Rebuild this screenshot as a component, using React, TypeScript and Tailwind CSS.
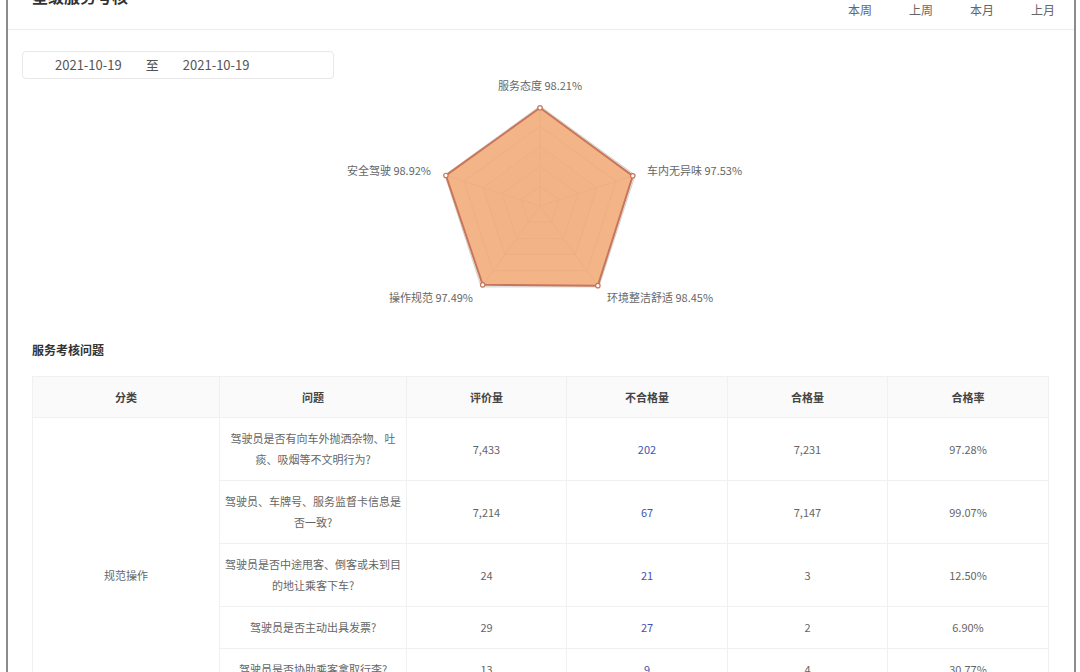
const axes = [
  { name: '服务态度', value: 98.21, angle: -90 },
  { name: '车内无异味', value: 97.53, angle: -18 },
  { name: '环境整洁舒适', value: 98.45, angle: 54 },
  { name: '操作规范', value: 97.49, angle: 126 },
  { name: '安全驾驶', value: 98.92, angle: 198 },
];

const CX = 219;
const CY = 129;
const R = 100;

const pt = (angle: number, r: number) => {
  const a = (angle * Math.PI) / 180;
  return [CX + r * Math.cos(a), CY + r * Math.sin(a)];
};

const ring = (r: number) => axes.map((a) => pt(a.angle, r).join(',')).join(' ');

const rows = [
  { q: '驾驶员是否有向车外抛洒杂物、吐痰、吸烟等不文明行为?', total: '7,433', bad: '202', good: '7,231', rate: '97.28%' },
  { q: '驾驶员、车牌号、服务监督卡信息是否一致?', total: '7,214', bad: '67', good: '7,147', rate: '99.07%' },
  { q: '驾驶员是否中途甩客、倒客或未到目的地让乘客下车?', total: '24', bad: '21', good: '3', rate: '12.50%' },
  { q: '驾驶员是否主动出具发票?', total: '29', bad: '27', good: '2', rate: '6.90%' },
  { q: '驾驶员是否协助乘客拿取行李?', total: '13', bad: '9', good: '4', rate: '30.77%' },
  { q: '驾驶员是否按规定使用计价器?', total: '18', bad: '5', good: '13', rate: '72.22%' },
];

const RadarChart = () => {
  const levels = [100, 80, 60, 40, 20];
  const data = axes.map((a) => pt(a.angle, a.value));
  return (
    <svg width="440" height="240" viewBox="0 0 440 240" className="mx-auto -mt-[2px] block">
      {/* split areas */}
      {levels.map((l, i) => (
        <polygon key={l} points={ring(l)} fill={i % 2 === 0 ? '#e2e2e2' : '#fafafa'} fillOpacity={0.3} stroke="#d0d0d0" strokeWidth={1} />
      ))}
      {axes.map((a) => {
        const [x, y] = pt(a.angle, R);
        return <line key={a.name} x1={CX} y1={CY} x2={x} y2={y} stroke="#d0d0d0" strokeWidth={1} />;
      })}
      <polygon
        points={data.map((p) => p.join(',')).join(' ')}
        fill="#f2a873"
        fillOpacity={0.85}
        stroke="#c8765a"
        strokeWidth={2}
        strokeLinejoin="round"
      />
      {data.map(([x, y], i) => (
        <circle key={i} cx={x} cy={y} r={2.2} fill="#fff" stroke="#c8765a" strokeWidth={1.2} />
      ))}
      <g fontSize="11" fill="#666" dominantBaseline="middle">
        <text x={219} y={10} textAnchor="middle">服务态度 98.21%</text>
        <text x={326} y={95} textAnchor="start">车内无异味 97.53%</text>
        <text x={286} y={222} textAnchor="start">环境整洁舒适 98.45%</text>
        <text x={152} y={222} textAnchor="end">操作规范 97.49%</text>
        <text x={110} y={95} textAnchor="end">安全驾驶 98.92%</text>
      </g>
    </svg>
  );
};

const App = () => {
  return (
    <div className="bg-white min-h-screen pl-[6px] pr-[4px] font-['Noto_Sans_CJK_SC','Liberation_Sans',sans-serif]">
      <div className="border-x-2 border-[#8c8c8c] min-h-screen pb-10">
        {/* Header */}
        <div className="-mt-5 h-[50px] border-b border-[#ececec] flex items-start justify-between pl-6 pr-[19px]">
          <h1 className="pt-1 text-[16px] leading-[24px] font-bold text-[#333]">星级服务考核</h1>
          <div className="pt-[21px] flex gap-[37px] text-[12px] leading-[18px] text-[#666]">
            <span>本周</span>
            <span>上周</span>
            <span>本月</span>
            <span>上月</span>
          </div>
        </div>

        {/* Date range */}
        <div className="mt-[21px] ml-[14px] w-[312px] h-[28px] border border-[#e8e8e8] rounded flex items-center gap-6 pl-[32px] text-[13px] text-[#555]">
          <span>2021-10-19</span>
          <span>至</span>
          <span>2021-10-19</span>
        </div>

        <RadarChart />

        <h2 className="mt-[25px] ml-6 text-[12px] leading-[16px] font-bold text-[#333]">服务考核问题</h2>

        <table className="mt-[18px] ml-6 w-[1016px] table-fixed border-collapse text-[11px] text-center">
          <colgroup>
            <col className="w-[187px]" />
            <col className="w-[187px]" />
            <col className="w-[160px]" />
            <col className="w-[161px]" />
            <col className="w-[160px]" />
            <col className="w-[161px]" />
          </colgroup>
          <thead>
            <tr className="bg-[#fafafa] text-[#444] font-bold">
              <th className="border border-[#f0f0f0] py-[10px] leading-[20px]">分类</th>
              <th className="border border-[#f0f0f0] py-[10px] leading-[20px]">问题</th>
              <th className="border border-[#f0f0f0] py-[10px] leading-[20px]">评价量</th>
              <th className="border border-[#f0f0f0] py-[10px] leading-[20px]">不合格量</th>
              <th className="border border-[#f0f0f0] py-[10px] leading-[20px]">合格量</th>
              <th className="border border-[#f0f0f0] py-[10px] leading-[20px]">合格率</th>
            </tr>
          </thead>
          <tbody className="text-[#666] leading-[21px]">
            {rows.map((r, i) => (
              <tr key={i}>
                {i === 0 && (
                  <td rowSpan={rows.length} className="border border-[#f0f0f0]">
                    规范操作
                  </td>
                )}
                <td className="border border-[#f0f0f0] py-[10px] px-1">{r.q}</td>
                <td className="border border-[#f0f0f0] py-[10px]">{r.total}</td>
                <td className="border border-[#f0f0f0] py-[10px] text-[#4353b3]">{r.bad}</td>
                <td className="border border-[#f0f0f0] py-[10px]">{r.good}</td>
                <td className="border border-[#f0f0f0] py-[10px]">{r.rate}</td>
              </tr>
            ))}
          </tbody>
        </table>
      </div>
    </div>
  );
};

export default App;
